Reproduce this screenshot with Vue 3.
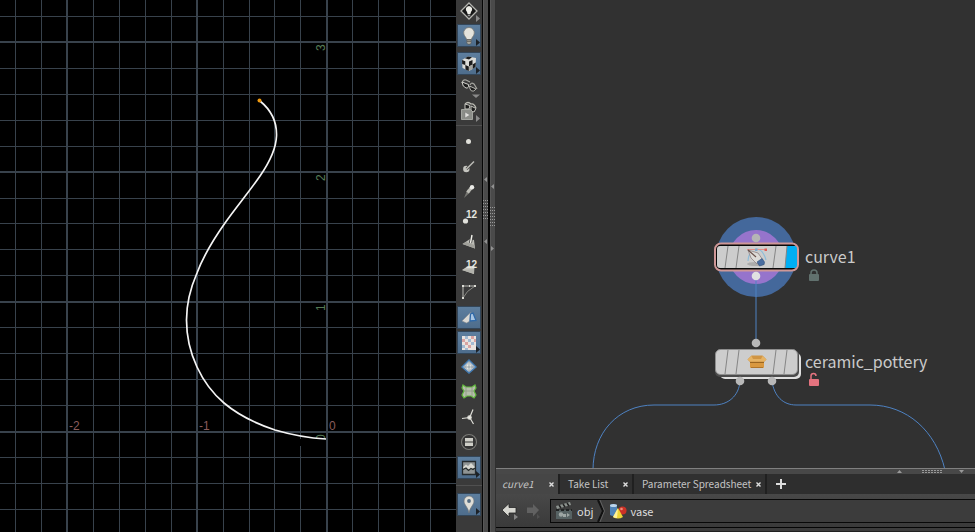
<script setup>
import { ref } from 'vue'

const verticals = [
  { at: 67, major: true }, { at: 197, major: true }, { at: 327, major: true },
  ...[15, 41, 93, 119, 145, 171, 223, 249, 274, 300, 352, 378, 404, 430].map(at => ({ at, major: false })),
]
const horizontals = [
  { at: 42, major: true }, { at: 172, major: true }, { at: 302, major: true }, { at: 432, major: true },
  ...[16, 68, 94, 120, 146, 198, 223, 249, 275, 327, 353, 379, 405, 457, 483, 509].map(at => ({ at, major: false })),
]

const groups = [
  [
    { id: 'headlight', label: 'Headlight', menu: 'light' },
    { id: 'bulb', label: 'Normal lighting', on: true, menu: 'dark' },
  ],
  [
    { id: 'material', label: 'Materials', on: true, menu: 'dark' },
    { id: 'glasses', label: 'Visibility', menu: 'down' },
    { id: 'camera', label: 'Object display', menu: 'light' },
  ],
  [
    { id: 'points', label: 'Display points' },
    { id: 'normals', label: 'Point normals' },
    { id: 'trails', label: 'Point trails' },
    { id: 'ptnum', label: 'Point numbers' },
    { id: 'primnorm', label: 'Primitive normals' },
    { id: 'primnum', label: 'Primitive numbers' },
    { id: 'hull', label: 'Primitive hulls' },
    { id: 'shade', label: 'Shading', on: true },
    { id: 'checker', label: 'Textures', on: true, menu: 'dark' },
    { id: 'crystal', label: 'Subdivision' },
    { id: 'group', label: 'Groups' },
    { id: 'axis', label: 'Origin axes' },
    { id: 'list', label: 'Attributes' },
    { id: 'image', label: 'Background image', on: true, menu: 'dark' },
  ],
  [{ id: 'pin', label: 'Handles', on: true, menu: 'dark' }],
]

const tabs = ['curve1', 'Take List', 'Parameter Spreadsheet']
const active = ref('curve1')
</script>

<template>
  <main class="workspace">
    <section class="viewport" aria-label="Scene view">
      <svg class="canvas">
        <g class="grid">
          <line v-for="v in verticals" :key="'v' + v.at" :x1="v.at" :x2="v.at" y1="0" y2="100%" :class="v.major ? 'major' : 'minor-v'" />
          <line v-for="h in horizontals" :key="'h' + h.at" x1="0" x2="100%" :y1="h.at" :y2="h.at" :class="h.major ? 'major' : 'minor-h'" />
        </g>
        <g class="axis-x">
          <text x="69" y="430">-2</text>
          <text x="199" y="430">-1</text>
          <text x="329" y="430">0</text>
        </g>
        <g class="axis-y">
          <text transform="translate(325 51) rotate(-90)">3</text>
          <text transform="translate(325 181) rotate(-90)">2</text>
          <text transform="translate(325 311) rotate(-90)">1</text>
          <text transform="translate(325 441) rotate(-90)">0</text>
        </g>
        <path d="M300 439H326V446H300Z" fill="#000" />
        <path class="profile" d="M260 101C271 110 277 122 276.500 136C276 150 269 163 260 176C249 192 237 206 225 223C213 240 203 257 197 273C190 289 186.500 303 186.500 320C186.500 337 190 352 197 367C203 380 211 392 224 403C237 414 257 424 275 430C292 435 308 438 326 439" />
        <circle cx="259.500" cy="100.500" r="2" fill="#f09a10" />
      </svg>
    </section>

    <aside class="toolbar" aria-label="Display options">
      <div v-for="(g, i) in groups" :key="i" class="tool-group" :class="'g' + i">
        <button v-for="t in g" :key="t.id" class="tool" :class="{ on: t.on }" :aria-label="t.label">
          <svg viewBox="0 0 24 23" width="24" height="23">
            <g v-if="t.id === 'headlight'">
              <path d="M12 3L20 11L12 19L4 11Z" fill="#161616" stroke="#b5b5b0" stroke-width="1.300" />
              <path d="M12 6a3.400 3.400 0 0 0-2 6l.6 2h2.800l.6-2a3.400 3.400 0 0 0-2-6Z" fill="#eeeee8" />
              <path d="M10.700 14.500h2.600v1.800h-2.600Z" fill="#999" />
            </g>
            <g v-else-if="t.id === 'bulb'">
              <path d="M12 3.500a5.300 5.300 0 0 0-5.200 6.400c.6 2.200 2.400 3.400 2.800 5.600h4.800c.4-2.200 2.200-3.400 2.800-5.600A5.300 5.300 0 0 0 12 3.500Z" fill="#e4e3dc" stroke="#76736c" stroke-width=".7" />
              <path d="M9.800 15.500h4.400v3.500l-1 1.300h-2.400l-1-1.300Z" fill="#aaa99f" stroke="#505050" stroke-width=".6" />
              <path d="M10 17.200h4" stroke="#55534f" />
            </g>
            <g v-else-if="t.id === 'material'">
              <path d="M5 8L11 4.500L19 6L18.500 15L12 19L5.500 16Z" fill="#dcdcd7" />
              <path d="M8 6.300L11 4.500L15 5.200L12 7.500ZM5 8L8.300 9.200V13L5.200 12ZM8.300 13L11.800 14.500V19L8.500 17.500ZM12 9.500L15.500 8V12.500L12 14.500ZM15.500 12.500L18.800 10.500L18.500 15L15.500 17Z" fill="#1b1b1b" />
              <path d="M12 14.500L15.500 12.500V17L12 19Z" fill="#a5a59f" />
            </g>
            <g v-else-if="t.id === 'glasses'">
              <path d="M5 7Q6 3 9 4L13 6M13 9Q14 6 17 8L20 13" fill="none" stroke="#a5a59f" stroke-width="1.200" />
              <path d="M5 6L11.500 8.500Q12 12.500 9 12Q5.500 11 5 6Z" fill="#1c1c1c" stroke="#d2d2cc" />
              <path d="M12.500 10L19 13Q17 16 14.500 15Q12.500 13.500 12.500 10Z" fill="#1c1c1c" stroke="#b5b5af" />
            </g>
            <g v-else-if="t.id === 'camera'">
              <path d="M8 4Q11 1 14 4Q17 3 19 8" fill="none" stroke="#bcbcb4" stroke-width="1.200" />
              <path d="M8 4L13 5.500L12 9H8ZM14 6L19 8.500L17 12L14 11Z" fill="#1c1c1c" stroke="#c5c5be" />
              <path d="M4.500 9.500h9l2 2v8H4.500Z" fill="#8b8d88" stroke="#b3b5af" stroke-width=".8" />
              <path d="M8 12L13 15L8 18Z" fill="#e0e0dc" stroke="#777" stroke-width=".5" />
            </g>
            <circle v-else-if="t.id === 'points'" cx="11.500" cy="10.500" r="2.500" fill="#e0e0da" />
            <g v-else-if="t.id === 'normals'">
              <circle cx="9.300" cy="13" r="3.200" fill="#c5c5bf" />
              <path d="M9.500 13L13 9.500" stroke="#3f3f3b" stroke-width="2.600" />
              <path d="M9 13.500L17 5.500" stroke="#bdbdb8" stroke-width="1.400" />
            </g>
            <g v-else-if="t.id === 'trails'">
              <path d="M7 17L10.500 8.500L13.500 11Z" fill="#777772" />
              <path d="M10.500 11.500L15 6" stroke="#bdbdb6" stroke-width="3.200" />
              <circle cx="15" cy="6.200" r="2.200" fill="#ecece8" />
            </g>
            <g v-else-if="t.id === 'ptnum'">
              <circle cx="8.500" cy="15" r="2.600" fill="#e2e2dc" />
              <text x="9" y="12" class="number">12</text>
            </g>
            <g v-else-if="t.id === 'primnorm'">
              <path d="M5.500 13L13 8L17 9L18 17.500Z" fill="#bcbcb6" />
              <path d="M5.500 13L18 17.500L17.500 14L9 11Z" fill="#a0a09a" />
              <path d="M13.500 12L15 4" stroke="#3a3a3a" stroke-width="3" />
              <path d="M13.500 12L15 4" stroke="#f0f0ea" stroke-width="1.400" />
            </g>
            <g v-else-if="t.id === 'primnum'">
              <path d="M5 14L11 10H17.500L17 18Z" fill="#c8c8c0" /><path d="M5 14L17 13V18Z" fill="#b2b2ab" />
              <text x="9" y="12" class="number">12</text>
            </g>
            <g v-else-if="t.id === 'hull'">
              <path d="M6 17V5H18" fill="none" stroke="#b8b8b2" /><path d="M6 17Q9 10 18 5" fill="none" stroke="#8a8a85" />
              <path d="M5 4h2v2H5ZM17 4h2v2h-2ZM5 16h2v2H5ZM12 4h1v2h-1Z" fill="#ddddd6" />
            </g>
            <g v-else-if="t.id === 'shade'">
              <path d="M5 15L13.500 6.500L13 15L9.500 17Z" fill="#dad9d4" stroke="#8b8f92" stroke-width=".6" />
              <path d="M13.500 8L16 7L19 14.500L13 15Z" fill="#a9c6e2" stroke="#2f69a8" stroke-width="1.300" />
            </g>
            <g v-else-if="t.id === 'checker'">
              <path d="M5 5H19V19H5Z" fill="#e9e3df" />
              <path d="M8 5h3v3H8ZM14 5h3v3h-3ZM5 8h3v3H5ZM11 8h3v3h-3ZM17 8h2v3h-2ZM8 11h3v3H8ZM14 11h3v3h-3ZM5 14h3v3H5ZM11 14h3v3h-3Z" fill="#d8a3a1" />
              <path d="M8 5h3v3H8ZM11 8h3v3h-3ZM14 11h3v3h-3ZM5 14h3v3H5ZM8 17h3v2H8Z" fill="#a3bad2" />
            </g>
            <g v-else-if="t.id === 'crystal'">
              <path d="M12 4L19 11L12 17L5 11Z" fill="#b9c1c8" stroke="#437bb2" stroke-width="1.400" />
              <path d="M12 6L14.500 11L12 15L9 11Z" fill="#ecebe5" /><path d="M12 5V16M7 11H17" fill="none" stroke="#758694" stroke-width=".7" />
            </g>
            <g v-else-if="t.id === 'group'">
              <path d="M6 4L9 6H15L18 4L19 7L17 10L19 14L17 17L14 15H10L7 17L5 14L7 10L5 7Z" fill="#b6bdac" stroke="#62b83e" stroke-width="1.200" />
              <path d="M9 6V15M15 6V15M7 10H17" stroke="#87967c" stroke-width=".7" />
            </g>
            <g v-else-if="t.id === 'axis'" stroke="#dcdcd6" stroke-width="1.200">
              <path d="M12.700 11.500L16 3.500M12.700 11.500L16.500 18M12.700 11.500L5 12.500" /><circle cx="12.500" cy="11.500" r="1.700" fill="#eeeee8" />
            </g>
            <g v-else-if="t.id === 'list'">
              <circle cx="12" cy="11" r="7.500" fill="#353535" stroke="#7a7a76" stroke-width="1.100" />
              <path d="M8 7h8v3.500H8ZM8 11.500h8V15H8Z" fill="#cfcfc8" />
            </g>
            <g v-else-if="t.id === 'image'">
              <path d="M5.500 5.500H18.500V18.500H5.500Z" fill="#8f9494" stroke="#252b2e" stroke-width="1.300" />
              <path d="M6.200 11L9 8.500L11 10L14 7L17.800 11V12L14.500 13L11.500 14.500L9 12L6.200 13Z" fill="#d7d8d1" />
              <path d="M6 13.500L9 12L11.500 14.500L14 12.500L16 13.500L18 12" fill="none" stroke="#252b2b" stroke-width="1.200" />
            </g>
            <g v-else>
              <path d="M12 3a5 5 0 0 0-5 5c0 4 4 6 5 12c1-6 5-8 5-12a5 5 0 0 0-5-5Z" fill="#dfded7" stroke="#6e7478" stroke-width=".7" />
              <circle cx="12" cy="8" r="1.900" fill="#526b82" />
            </g>
            <path v-if="t.menu === 'light'" d="M19 15L23 18.500L19 22Z" fill="#8a8a8a" />
            <path v-if="t.menu === 'dark'" d="M19 15L23 18.500L19 22Z" fill="#1c2126" />
            <path v-if="t.menu === 'down'" d="M15 18.500H23L19 22Z" fill="#8a8a8a" />
          </svg>
        </button>
      </div>
    </aside>

    <div class="splitters" aria-hidden="true">
      <svg width="14" height="100%">
        <path d="M1 0H6V900H1ZM8 0H13V900H8Z" fill="#4a4a4a" />
        <path d="M1.500 0V900M8.500 0V900" stroke="#575757" />
        <path d="M13 0H14V900H13Z" fill="#303030" />
        <path d="M5 177V182L2 179.500ZM5 239V244L2 241.500ZM12 184V189L9 186.500ZM9 246V251L12 248.500Z" fill="#929292" />
        <path d="M1.500 200V220M3.500 200V220M5.500 200V220M8.500 207V227M10.500 207V227M12.500 207V227" stroke="#999" stroke-dasharray="1 2" />
      </svg>
    </div>

    <section class="editor">
      <svg class="network" role="img" aria-label="Network graph">
        <circle cx="260" cy="257" r="40" fill="#44689b" />
        <circle cx="260" cy="257" r="27" fill="#9674cc" />
        <g class="wires">
          <path d="M260 276V343M244 381C243 396 232 405 218 405H158C122 405 97 433 97 470M276 381C278 396 287 405 300 405H374C411 405 440 431 449 470" />
        </g>

        <rect x="219" y="243.500" width="83" height="27" rx="6" fill="#090909" stroke="#cf9797" stroke-width="2" />
        <rect x="221" y="246" width="80" height="22" rx="3" fill="#cdcdcd" />
        <path d="M291 246H298Q301 246 301 249V265Q301 268 298 268H289Z" fill="#00aef4" />
        <path class="slant" d="M232 246L229 268M243 246L240 268M280 246L277 268M291 246L289 268" />
        <circle cx="260" cy="238" r="4.300" fill="#b5b5b5" />
        <circle cx="260" cy="276" r="4.300" fill="#e1e1e1" />
        <g>
          <ellipse cx="260" cy="264" rx="9" ry="2" fill="#acacac" />
          <path d="M252 261Q252 256 255 252M260 249Q267 249 270 260" fill="none" stroke="#8fbdd9" stroke-width="1.200" />
          <path d="M251 249.500H269" stroke="#e0908c" />
          <path d="M268.500 248.500h2.500v2.500h-2.500Z" fill="#e05a56" />
          <path d="M259 248.500h2.500v2.500h-2.500Z" fill="#7fa9cc" />
          <path d="M252 250L262 253L267 260L261 264L255 258Z" fill="#dddbd8" stroke="#85797a" stroke-width=".7" />
          <path d="M252 250L260 257" stroke="#6a524b" stroke-width="1.200" />
          <path d="M261 262L266 258.500L268.500 262L268 264.500L263.500 266Z" fill="#4a6da0" stroke="#2f4f7b" stroke-width=".6" />
        </g>
        <text x="309" y="263" class="node-name">curve1</text>
        <path d="M315 274V273a3 3 0 0 1 6 0V274" fill="none" stroke="#61716e" stroke-width="1.500" />
        <rect x="313" y="274" width="10" height="7" rx="1" fill="#61716e" />

        <rect x="224" y="353" width="81" height="26" rx="5" fill="#e0e0e0" />
        <rect x="219" y="350" width="84" height="27" rx="5" fill="#4c4c4c" />
        <rect x="219.500" y="349.500" width="82" height="25" rx="5" fill="#cdcdcd" stroke="#8e8e8e" />
        <path class="slant" d="M232 350L229 374M243 350L240 374M280 350L277 374M291 350L288 374" />
        <path d="M254 361H268V367Q268 368 267 368H255Q254 368 254 367Z" fill="#d9983f" />
        <path d="M255.500 355.500H266.500L270.500 359.500L268 362H254L251.500 359.500Z" fill="#d09544" />
        <path d="M251.500 359.500L255.500 356L257 359H265L266.500 356L270.500 359.500L268 361.500H254Z" fill="#e6b364" />
        <path d="M254 362.500H268" stroke="#9a6521" />
        <path d="M255 367.500H267" stroke="#b07428" />
        <circle cx="260" cy="343" r="4.300" fill="#b8b8b8" />
        <circle cx="244" cy="381" r="4.300" fill="#b8b8b8" />
        <circle cx="276" cy="381" r="4.300" fill="#b8b8b8" />
        <text x="309" y="368" class="node-name">ceramic_pottery</text>
        <path d="M315 379V376a2.500 2.500 0 0 1 5 0" fill="none" stroke="#e4737f" stroke-width="1.500" />
        <rect x="313" y="379" width="10" height="7" rx="1" fill="#e4737f" />
      </svg>

      <div class="pane-bar" aria-hidden="true">
        <svg width="80" height="5">
          <path d="M2 4H7L4.500 1ZM64 1H69L66.500 4Z" fill="#999" />
          <path d="M27 1.500H47M27 3.500H47" stroke="#999" stroke-dasharray="2 1" />
        </svg>
      </div>
      <div class="tabs" role="tablist">
        <div v-for="t in tabs" :key="t" class="tab" :class="{ active: active === t }">
          <button role="tab" :aria-selected="active === t" @click="active = t">{{ t }}</button>
          <button class="close" :aria-label="'Close ' + t">
            <svg width="5" height="5"><path d="M.5 .5L4.500 4.500M4.500 .5L.5 4.500" stroke="#dedede" stroke-width="1.400" /></svg>
          </button>
        </div>
        <button class="add" aria-label="New tab">
          <svg width="10" height="10"><path d="M5 0V10M0 5H10" stroke="#ddd" stroke-width="2" /></svg>
        </button>
      </div>
      <div class="path-row">
        <button class="nav" aria-label="Back">
          <svg width="18" height="18"><path d="M1 8L8 1.500V5.500H15V11H8V15Z" fill="#d6d6d0" stroke="#242424" stroke-width=".8" /><path d="M13 12L17 15L13 18Z" fill="#858585" /></svg>
        </button>
        <button class="nav" aria-label="Forward">
          <svg width="18" height="18"><path d="M14 8L8 2V5.500H2V11H8V14.500Z" fill="#616161" /><path d="M12 12L15 15L12 17Z" fill="#505050" /></svg>
        </button>
        <nav class="path" aria-label="Network path">
          <a href="#obj">
            <svg width="18" height="18">
              <path d="M1 8H17V17H1Z" fill="#566263" /><path d="M1 4L15 0L16 3L2 7Z" fill="#8d938f" />
              <path d="M4 3L6 6M8 2L10 5M12 1L14 4" stroke="#222" stroke-width="1.500" />
              <path d="M1 8H17" stroke="#202323" stroke-width="2" stroke-dasharray="3 2" />
              <circle cx="6" cy="12.500" r="2.200" fill="#9da6a4" /><path d="M8 12h3v3H8ZM12 11l3 2l-3 2Z" fill="#9da6a4" />
            </svg>obj
          </a>
          <svg class="chevron" width="8" height="22"><path d="M1 0L6 11L1 22" fill="none" stroke="#111" stroke-width="2" /><path d="M3 0L7.500 11L3 22" fill="none" stroke="#606060" /></svg>
          <a href="#vase">
            <svg width="18" height="16">
              <path d="M1 2Q4 0 8 2V12Q4 14 1 12Z" fill="#5084b8" /><ellipse cx="4.500" cy="2.500" rx="3.500" ry="1.500" fill="#bdd5ea" />
              <circle cx="13.500" cy="7.500" r="4" fill="#cc3226" /><circle cx="12.500" cy="6" r="1.300" fill="#ed8c7c" />
              <path d="M9 5L14 14Q9 17 4 14Z" fill="#eed637" /><path d="M9 5L8 15Q5 15 4 14Z" fill="#fff29a" />
            </svg>vase
          </a>
        </nav>
      </div>
      <div class="lower"></div>
    </section>
  </main>
</template>

<style>
body { margin: 0; background: #000; }
</style>

<style scoped>
.workspace {
  display: grid;
  grid-template-columns: minmax(0, 456fr) 26px 14px minmax(0, 479fr);
  height: 100vh;
  overflow: hidden;
  background: #000;
  color: #c4c4c4;
  font-family: "Noto Sans CJK SC", "Noto Sans", sans-serif;
  font-size: 10px;
}
button { padding: 0; border: 0; background: none; color: inherit; font: inherit; }
svg { display: block; }
.viewport { min-height: 0; }
.canvas { width: 100%; height: 100%; }
.grid line { stroke: #38424c; shape-rendering: crispEdges; }
.grid .major { stroke-width: 2px; }
.grid .minor-v { transform: translateX(0.5px); }
.grid .minor-h { transform: translateY(0.5px); }
.axis-x, .axis-y { font-family: "Liberation Sans", sans-serif; font-size: 12px; }
.axis-x { fill: #8a5c5c; }
.axis-y { fill: #557a55; }
.profile { fill: none; stroke: #f4f4f4; stroke-width: 1.700px; }

.toolbar { background: #3a3a3a; overflow: hidden; }
.tool-group { display: flex; flex-direction: column; align-items: center; gap: 1px; }
.g1 { padding: 5px 0 2px; border-bottom: 1px solid #505050; }
.g2 { gap: 2px; padding: 5px 0 6px; border-bottom: 1px solid #505050; }
.g3 { padding-top: 7px; }
.tool { width: 24px; height: 23px; }
.tool.on { background: linear-gradient(#5e7f9f, #4d6c8b); box-shadow: inset 0 0 0 1px #334659; }
.number { fill: #e6e6e0; font-family: "Liberation Sans", sans-serif; font-size: 10px; font-weight: bold; }
.splitters { background: #050505; overflow: hidden; }

.editor { display: flex; flex-direction: column; min-height: 0; background: #3c3c3c; }
.network { flex: 1; width: 100%; min-height: 0; background: #313131; }
.wires { fill: none; stroke: #4e82c2; stroke-width: 1px; }
.slant { fill: none; stroke: #858585; stroke-width: 1px; }
.node-name { fill: #cacaca; font-size: 16px; }
.pane-bar { display: flex; justify-content: flex-end; border-top: 1px solid #808080; background: #484848; }
.tabs { display: flex; align-items: stretch; height: 20px; background: #2e2e2e; }
.tab { box-sizing: border-box; display: flex; align-items: center; justify-content: space-between; gap: 3px; min-width: 74px; padding: 0 2px 0 8px; border-right: 2px solid #202020; background: #303030; line-height: 18px; }
.tab.active { min-width: 64px; padding-left: 6px; background: #464646; font-style: italic; }
.tab button { white-space: nowrap; }
.tab .close { padding: 2px; }
.add { padding: 0 9px; }
.path-row { display: flex; align-items: center; padding: 5px 0 4px 5px; border-bottom: 1px solid #050505; background: linear-gradient(#484848, #3a3a3a); }
.nav { width: 24px; }
.nav + .path { margin-left: 1px; }
.path { display: flex; flex: 1; align-items: center; height: 22px; border: 1px solid #080808; border-right: 0; background: #3c3c3c; font-size: 11px; }
.path a { display: flex; align-items: center; gap: 4px; padding: 0 4px; color: #ddd; line-height: 22px; text-decoration: none; }
.chevron { margin-left: -1px; }
.lower { height: 3px; border-bottom: 1px solid #202020; }
</style>
